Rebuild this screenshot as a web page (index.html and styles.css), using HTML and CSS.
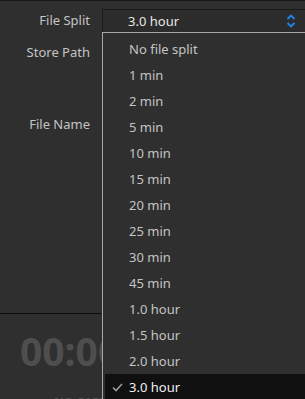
FILE: index.html
```html
<!DOCTYPE html>
<html lang="en">
<head>
    <meta charset="UTF-8">
    <meta name="viewport" content="width=device-width, initial-scale=1.0">
    <link rel="stylesheet" href="styles.css">
    <title>Record Settings</title>
</head>
<body>

<div class="panel">
    <div class="form">
        <div class="row row-split">
            <label class="label">File Split</label>
            <div class="combo">
                <span class="combo-text">3.0 hour</span>
                <svg class="combo-arrows" width="10" height="14" viewBox="0 0 10 14">
                    <path d="M1.5 5 L5 1.5 L8.5 5" fill="none" stroke="#1e88f0" stroke-width="1.8"/>
                    <path d="M1.5 9 L5 12.5 L8.5 9" fill="none" stroke="#1e88f0" stroke-width="1.8"/>
                </svg>
            </div>
        </div>
        <div class="row row-path">
            <label class="label">Store Path</label>
            <div class="field"></div>
        </div>
        <div class="row row-name">
            <label class="label">File Name</label>
            <div class="field"></div>
        </div>
    </div>

    <div class="status">
        <div class="timer">00:00:00</div>
        <div class="caption">NO CAPTURE</div>
    </div>
</div>

<ul class="dropdown" id="dropdown"></ul>

<script>
    const dropdown = document.getElementById("dropdown");

    const options = [
        "No file split", "1 min", "2 min", "5 min", "10 min", "15 min", "20 min",
        "25 min", "30 min", "45 min", "1.0 hour", "1.5 hour", "2.0 hour", "3.0 hour"
    ];
    const selected = "3.0 hour";
    const checkIcon = '<svg width="11" height="9" viewBox="0 0 11 9"><path d="M1 4.5 L4 7.5 L10 1" fill="none" stroke="#9a9a9a" stroke-width="1.6"/></svg>';

    let output = "";
    for (const opt of options) {
        const isSel = opt === selected;
        output += `<li class="item${isSel ? " selected" : ""}"><span class="check">${isSel ? checkIcon : ""}</span>${opt}</li>`;
    }
    dropdown.innerHTML = output;
</script>

</body>
</html>
```

FILE: styles.css
```css
body {
    margin: 0;
    background: #2f2f2f;
    font-family: 'Noto Sans', 'Open Sans', sans-serif;
    font-size: 13px;
    color: #c8c8c8;
    height: 399px;
    overflow: hidden;
}

.panel {
    border-top: 1px solid #161616;
    height: 398px;
    display: flex;
    flex-direction: column;
}

.form {
    height: 313px;
    border-bottom: 1px solid #0e0e0e;
    padding-top: 8px;
    box-sizing: border-box;
}

.row {
    display: flex;
    align-items: flex-start;
}

.label {
    width: 90px;
    text-align: right;
    line-height: 22px;
    flex-shrink: 0;
    color: #c4c4c4;
}

.row-path {
    margin-top: 8px;
    height: 72px;
}

.combo {
    margin-left: 12px;
    flex: 1;
    height: 22px;
    border: 1px solid #1a1a1a;
    border-right: none;
    background: #2c2c2c;
    display: flex;
    align-items: center;
    padding-left: 25px;
}

.combo-text {
    flex: 1;
    color: #e6e6e6;
}

.combo-arrows {
    margin-right: 9px;
}

.field {
    margin-left: 12px;
    flex: 1;
    height: 22px;
}

.status {
    width: 82px;
    overflow: hidden;
    padding-left: 20px;
    padding-top: 15px;
    flex: 1;
}

.timer {
    font-size: 39px;
    font-weight: bold;
    color: #4e4e4e;
    line-height: 44px;
    white-space: nowrap;
}

.caption {
    margin-top: 21px;
    margin-left: 34px;
    font-size: 12px;
    font-weight: bold;
    color: #4e4e4e;
    white-space: nowrap;
}

.dropdown {
    position: absolute;
    left: 102px;
    top: 32px;
    right: 0;
    bottom: 0;
    margin: 0;
    padding: 3px 0 0;
    list-style: none;
    background: #2f2f2f;
    border-left: 1px solid #a8a8a8;
    border-top: 1px solid #a8a8a8;
}

.item {
    height: 26px;
    line-height: 26px;
    display: flex;
    align-items: center;
    color: #c4c4c4;
}

.check {
    width: 26px;
    display: flex;
    justify-content: center;
}

.selected {
    background: #101010;
    color: #f0f0f0;
    margin-left: 2px;
}

.selected .check {
    width: 24px;
}
```
